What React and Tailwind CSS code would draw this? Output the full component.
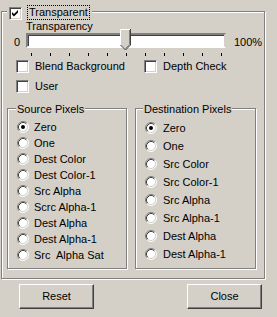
import React from 'react'

const font = { fontFamily: '"Liberation Sans", Arial, sans-serif' }

function CheckBox({ checked }) {
  return (
    <span className="block w-[13px] h-[13px] shrink-0 bg-white border border-t-[#808080] border-l-[#808080] border-b-white border-r-white shadow-[inset_1px_1px_0_#404040,inset_-1px_-1px_0_#d4d0c8]">
      {checked && (
        <svg width="11" height="11" viewBox="0 0 11 11" className="block">
          <path d="M2 4 L4 6 L8 2 V4.5 L4 8.5 L2 6.5 Z" fill="#000" />
        </svg>
      )}
    </span>
  )
}

function Radio({ checked }) {
  return (
    <svg width="12" height="12" viewBox="0 0 12 12" className="block shrink-0">
      <circle cx="6" cy="6" r="5" fill="#fff" />
      <path d="M2.11 9.89 A5.5 5.5 0 0 1 9.89 2.11" fill="none" stroke="#808080" />
      <path d="M2.82 9.18 A4.5 4.5 0 0 1 9.18 2.82" fill="none" stroke="#404040" />
      <path d="M9.89 2.11 A5.5 5.5 0 0 1 2.11 9.89" fill="none" stroke="#fff" />
      <path d="M9.18 2.82 A4.5 4.5 0 0 1 2.82 9.18" fill="none" stroke="#d4d0c8" />
      {checked && <circle cx="6" cy="6" r="2" fill="#000" />}
    </svg>
  )
}

function Button({ children }) {
  return (
    <button className="w-[75px] h-[25px] bg-[#d4d0c8] border border-t-white border-l-white border-b-[#404040] border-r-[#404040] shadow-[inset_-1px_-1px_0_#808080] text-[11px] leading-[13px] text-black">
      {children}
    </button>
  )
}

const sourceItems = ['Zero', 'One', 'Dest Color', 'Dest Color-1', 'Src Alpha', 'Scrc Alpha-1', 'Dest Alpha', 'Dest Alpha-1', 'Src  Alpha Sat']
const destItems = ['Zero', 'One', 'Src Color', 'Src Color-1', 'Src Alpha', 'Src Alpha-1', 'Dest Alpha', 'Dest Alpha-1']

export default function App() {
  return (
    <div className="w-[277px] h-[317px] bg-[#d4d0c8] pt-[11px] pl-[1px] text-[11px] leading-[13px] text-black overflow-hidden" style={font}>
      {/* Outer group */}
      <div className="relative w-[264px] h-[268px] border border-[#808080] shadow-[inset_1px_1px_0_#fff,1px_1px_0_#fff]">
        <div className="absolute left-[5px] top-[-7px] h-[15px] flex items-end bg-[#d4d0c8] pl-[2px] pr-[2px]">
          <CheckBox checked />
          <span className="ml-[5px] h-[15px] border border-dotted border-black px-[1px] whitespace-pre">Transparent</span>
        </div>

        <div className="mt-[8px] ml-[24px] h-[13px]">Transparency</div>

        {/* Slider */}
        <div className="flex items-start h-[20px]">
          <div className="w-[24px] pl-[12px] mt-[3px]">0</div>
          <div className="relative w-[200px] h-[15px] bg-white border-2 border-t-[#808080] border-l-[#808080] border-b-white border-r-[#d4d0c8] shadow-[inset_1px_1px_0_#404040]">
            <svg width="11" height="22" viewBox="0 0 11 22" className="absolute left-[92px] top-[-6px]">
              <path d="M0.5 0.5 H10.5 V16 L5.5 21 L0.5 16 Z" fill="#d4d0c8" />
              <path d="M0.5 16 V0.5 H10" fill="none" stroke="#fff" />
              <path d="M10.5 0 V16 L5.5 21 L0.5 16" fill="none" stroke="#404040" />
              <path d="M9.5 1 V15.6 L5.5 19.6" fill="none" stroke="#808080" />
            </svg>
          </div>
          <div className="ml-[8px] mt-[3px]">100%</div>
        </div>
        <div className="ml-[29px] w-[191px] h-[3px] flex justify-between">
          {Array.from({ length: 11 }).map((_, i) => (
            <span key={i} className="w-[1px] h-[3px] bg-black" />
          ))}
        </div>

        {/* Check rows */}
        <div className="mt-[4px] ml-[14px] flex h-[13px]">
          <div className="w-[128px] flex items-center gap-[6px]">
            <CheckBox />
            <span>Blend Background</span>
          </div>
          <div className="flex items-center gap-[6px]">
            <CheckBox />
            <span>Depth Check</span>
          </div>
        </div>
        <div className="mt-[7px] ml-[14px] flex items-center gap-[6px] h-[13px]">
          <CheckBox />
          <span>User</span>
        </div>

        {/* Pixel groups */}
        <div className="mt-[15px] ml-[5px] flex gap-[8px]">
          <div className="relative w-[120px] h-[161px] border border-[#808080] shadow-[inset_1px_1px_0_#fff,1px_1px_0_#fff]">
            <span className="absolute left-[8px] top-[-6px] px-[1px] bg-[#d4d0c8]">Source Pixels</span>
            <div className="pt-[10px] pl-[9px]">
              {sourceItems.map((t, i) => (
                <div key={i} className="h-[16px] flex items-center gap-[5px]">
                  <Radio checked={i === 0} />
                  <span className="whitespace-pre">{t}</span>
                </div>
              ))}
            </div>
          </div>
          <div className="relative w-[121px] h-[161px] border border-[#808080] shadow-[inset_1px_1px_0_#fff,1px_1px_0_#fff]">
            <span className="absolute left-[7px] top-[-6px] px-[1px] bg-[#d4d0c8]">Destination Pixels</span>
            <div className="pt-[10px] pl-[9px]">
              {destItems.map((t, i) => (
                <div key={i} className="h-[18px] flex items-center gap-[6px]">
                  <Radio checked={i === 0} />
                  <span>{t}</span>
                </div>
              ))}
            </div>
          </div>
        </div>
      </div>

      {/* Buttons */}
      <div className="mt-[5px] ml-[18px] flex gap-[93px]">
        <Button>Reset</Button>
        <Button>Close</Button>
      </div>
    </div>
  )
}
